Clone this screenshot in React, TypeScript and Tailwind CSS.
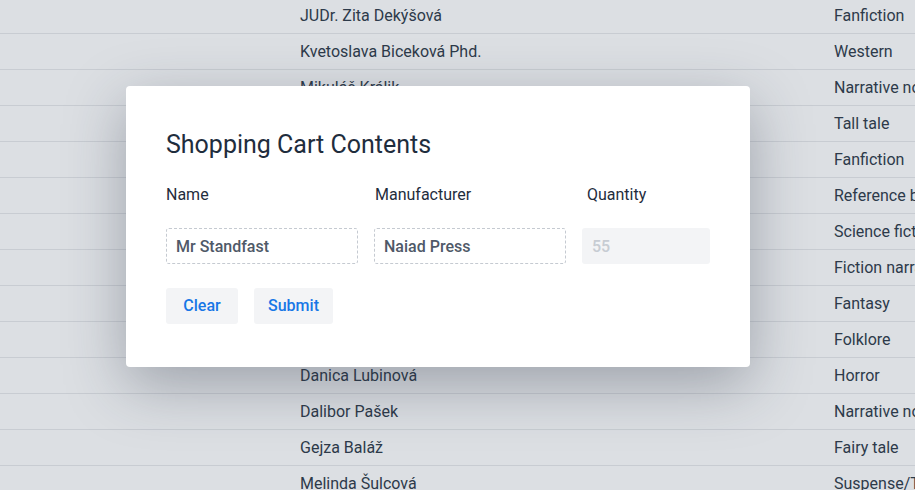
const rows = [
  ["JUDr. Zita Dekýšová", "Fanfiction"],
  ["Kvetoslava Biceková Phd.", "Western"],
  ["Mikuláš Králik", "Narrative nonfiction"],
  ["Ing. Peter Hudák", "Tall tale"],
  ["Zuzana Kováčová", "Fanfiction"],
  ["Marek Horváth", "Reference book"],
  ["Jana Novotná", "Science fiction"],
  ["Miroslav Varga", "Fiction narrative"],
  ["Eva Tóthová", "Fantasy"],
  ["Pavol Kučera", "Folklore"],
  ["Danica Lubinová", "Horror"],
  ["Dalibor Pašek", "Narrative nonfiction"],
  ["Gejza Baláž", "Fairy tale"],
  ["Melinda Šulcová", "Suspense/Thriller"],
]

export default function App() {
  return (
    <div className="relative h-[490px] w-[915px] overflow-hidden bg-[#dcdfe3] font-['Roboto',sans-serif]">
      <div className="-mt-[2px] flex flex-col">
        {rows.map(([name, genre], i) => (
          <div
            key={i}
            className="flex h-[36px] shrink-0 items-center border-b border-[#c8ccd2] text-[16px] text-[#2d3a4a]"
          >
            <div className="w-[300px] shrink-0" />
            <div className="w-[534px] shrink-0 whitespace-nowrap">{name}</div>
            <div className="whitespace-nowrap">{genre}</div>
          </div>
        ))}
      </div>

      {/* modal */}
      <div className="absolute inset-0 pl-[126px] pt-[86px]">
        <div className="w-[624px] rounded-[4px] bg-white px-[40px] pb-[43px] pt-[40px] shadow-[0_18px_60px_rgba(40,50,65,0.35)]">
          <h2 className="h-[38px] text-[25px] leading-[38px] text-[#1f2d3d]">
            Shopping Cart Contents
          </h2>
          <div className="mt-[13px] grid grid-cols-[192px_192px_128px] gap-x-[16px] text-[16px] text-[#1f2d3d]">
            <div className="leading-[36px]">Name</div>
            <div className="pl-[1px] leading-[36px]">Manufacturer</div>
            <div className="pl-[5px] leading-[36px]">Quantity</div>
          </div>
          <div className="mt-[15px] grid grid-cols-[192px_192px_128px] gap-x-[16px]">
            <input
              readOnly
              value="Mr Standfast"
              className="h-[36px] rounded-[3px] border border-dashed border-[#c5cad1] px-[9px] text-[16px] font-medium text-[#4f5968] outline-none"
            />
            <input
              readOnly
              value="Naiad Press"
              className="h-[36px] rounded-[3px] border border-dashed border-[#c5cad1] px-[9px] text-[16px] font-medium text-[#4f5968] outline-none"
            />
            <input
              disabled
              value="55"
              className="h-[36px] rounded-[3px] bg-[#f3f4f6] px-[10px] text-[16px] font-medium text-[#c7ccd3] outline-none"
            />
          </div>
          <div className="mt-[24px] flex gap-[16px]">
            <button className="h-[36px] w-[72px] rounded-[3px] bg-[#f3f4f6] text-[16px] font-medium text-[#1877e6]">
              Clear
            </button>
            <button className="h-[36px] w-[79px] rounded-[3px] bg-[#f3f4f6] text-[16px] font-medium text-[#1877e6]">
              Submit
            </button>
          </div>
        </div>
      </div>
    </div>
  )
}
